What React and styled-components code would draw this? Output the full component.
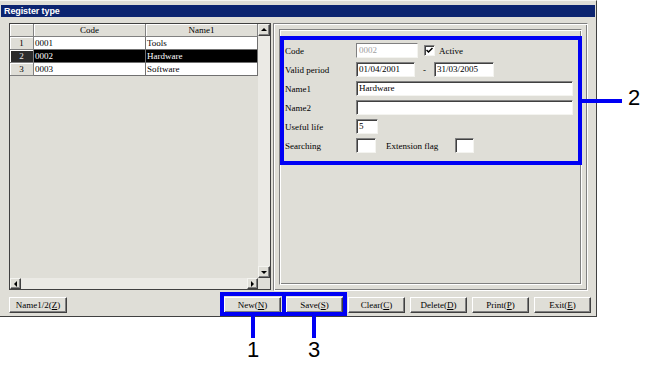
import React from 'react';
import styled, { createGlobalStyle } from 'styled-components';

const GRAY = '#dfded7';
const BLUE = '#0000f4';

const Global = createGlobalStyle`
  html, body { margin: 0; padding: 0; background: #fff; }
  body { font-family: "Liberation Serif", serif; }
  * { box-sizing: border-box; }
`;

const Page = styled.div`
  position: relative;
  width: 651px;
  height: 368px;
  background: #fff;
  overflow: hidden;
`;

const Window = styled.div`
  width: 597px;
  height: 317px;
  background: ${GRAY};
  border-top: 1px solid #f6f6f2;
  border-right: 1px solid #404040;
  border-bottom: 1px solid #404040;
  display: flex;
  flex-direction: column;
`;

const TitleBar = styled.div`
  height: 12px;
  margin: 4px 1px 0 1px;
  background: #0c2470;
  color: #fff;
  font: bold 9px "Liberation Sans", Arial, sans-serif;
  letter-spacing: -0.1px;
  line-height: 12px;
  padding-left: 3px;
`;

const Body = styled.div`
  display: flex;
  gap: 2px;
  margin-top: 6px;
  padding-left: 9px;
  height: 268px;
`;

const GridPanel = styled.div`
  width: 262px;
  height: 267px;
  border: 1px solid #404040;
  display: grid;
  grid-template-columns: 1fr 12px;
  grid-template-rows: 1fr 11px;
  background: ${GRAY};
`;

const Table = styled.div`
  display: grid;
  grid-template-columns: 24px 112px 112px;
  grid-auto-rows: 13px;
  align-content: start;
  font-size: 9px;
  line-height: 12px;
`;

const HeadCell = styled.div`
  background: ${GRAY};
  border-right: 1px solid #808080;
  border-bottom: 1px solid #808080;
  box-shadow: inset 1px 1px #fff;
  text-align: center;
  color: #000;
`;

const RowHead = styled(HeadCell)`
  background: ${(p) => (p.$sel ? '#2c2c2c' : GRAY)};
  color: ${(p) => (p.$sel ? '#e8e8e8' : '#000')};
`;

const DataCell = styled.div`
  background: ${(p) => (p.$sel ? '#000' : '#fff')};
  color: ${(p) => (p.$sel ? '#fff' : '#000')};
  border-right: 1px solid #707070;
  border-bottom: 1px solid #707070;
  padding-left: 1px;
  white-space: nowrap;
`;

const VScroll = styled.div`
  display: flex;
  flex-direction: column;
  background: #ebeae5;
`;

const HScroll = styled.div`
  display: flex;
  background: #ebeae5;
`;

const Track = styled.div`
  flex: 1;
`;

const Corner = styled.div`
  background: ${GRAY};
`;

const ScrollBtn = styled.div`
  width: ${(p) => p.$w}px;
  height: ${(p) => p.$h}px;
  flex: none;
  background: ${GRAY};
  border: 1px solid;
  border-color: #f4f4f0 #404040 #404040 #f4f4f0;
  box-shadow: inset -1px -1px #808080;
  display: flex;
  align-items: center;
  justify-content: center;
`;

const Arrow = styled.span`
  width: 0;
  height: 0;
  border: 3px solid transparent;
  ${(p) => p.$dir === 'up' && 'border-bottom-color:#000; border-top-width:0; margin-top:-1px;'}
  ${(p) => p.$dir === 'down' && 'border-top-color:#000; border-bottom-width:0;'}
  ${(p) => p.$dir === 'left' && 'border-right-color:#000; border-left-width:0;'}
  ${(p) => p.$dir === 'right' && 'border-left-color:#000; border-right-width:0;'}
`;

const RightPanel = styled.div`
  width: 315px;
  height: 268px;
  border: 1px solid;
  border-color: #808080 #fff #fff #808080;
  box-shadow: inset 1px 1px #fff, inset -1px -1px #808080;
  padding: 5px;
`;

const GroupBox = styled.div`
  height: 100%;
  border: 1px solid;
  border-color: #808080 #fff #fff #808080;
  box-shadow: inset 1px 1px #fff, inset -1px -1px #808080;
  padding: 13px 0 0 5px;
  display: flex;
  flex-direction: column;
  gap: 4px;
  font-size: 9px;
`;

const FormRow = styled.div`
  display: flex;
  align-items: center;
  height: 15px;
`;

const Label = styled.span`
  width: ${(p) => p.$w || 71}px;
  flex: none;
  margin-left: ${(p) => p.$ml || 0}px;
  color: #000;
`;

const Field = styled.div`
  width: ${(p) => p.$w}px;
  height: 15px;
  flex: none;
  background: #fff;
  border: 1px solid;
  border-color: #808080 #f4f4f0 #f4f4f0 #808080;
  box-shadow: ${(p) => (p.$dis ? 'none' : 'inset 1px 1px #404040')};
  color: ${(p) => (p.$dis ? '#a0a0a0' : '#000')};
  padding-left: 2px;
  line-height: 13px;
  white-space: nowrap;
  overflow: hidden;
`;

const Dash = styled.span`
  width: 19px;
  text-align: center;
  flex: none;
`;

const CheckBox = styled.span`
  width: 11px;
  height: 11px;
  margin-left: 6px;
  flex: none;
  background: #fff;
  border: 1px solid;
  border-color: #808080 #f4f4f0 #f4f4f0 #808080;
  box-shadow: inset 1px 1px #404040;
  display: flex;
  align-items: center;
  justify-content: center;
`;

const CheckText = styled.span`
  margin-left: 4px;
`;

const ButtonBar = styled.div`
  display: flex;
  justify-content: space-between;
  margin-top: 6px;
  padding: 0 5px 0 9px;
`;

const BtnGroup = styled.div`
  display: flex;
  gap: 5px;
`;

const Btn = styled.div`
  width: ${(p) => p.$w || 57}px;
  height: 16px;
  background: ${GRAY};
  border: 1px solid;
  border-color: #fff #404040 #404040 #fff;
  box-shadow: inset -1px -1px #808080;
  font-size: 9px;
  line-height: 14px;
  text-align: center;
  color: #000;
  white-space: nowrap;
`;

const Key = styled.u`
  text-decoration: underline;
`;

const Callout = styled.div`
  position: absolute;
  left: ${(p) => p.$x}px;
  top: ${(p) => p.$y}px;
  width: ${(p) => p.$w}px;
  height: ${(p) => p.$h}px;
  border: 4px solid ${BLUE};
`;

const Leader = styled.div`
  position: absolute;
  left: ${(p) => p.$x}px;
  top: ${(p) => p.$y}px;
  width: ${(p) => p.$w}px;
  height: ${(p) => p.$h}px;
  background: ${BLUE};
`;

const Num = styled.div`
  position: absolute;
  left: ${(p) => p.$x}px;
  top: ${(p) => p.$y}px;
  width: 20px;
  text-align: center;
  font: 22px/22px "Liberation Sans", Arial, sans-serif;
  color: #000;
`;

const rows = [
  ['1', '0001', 'Tools'],
  ['2', '0002', 'Hardware', true],
  ['3', '0003', 'Software'],
];

const buttons = [
  ['New', 'N'],
  ['Save', 'S'],
  ['Clear', 'C'],
  ['Delete', 'D'],
  ['Print', 'P'],
  ['Exit', 'E'],
];

export default function App() {
  return (
    <Page>
      <Global />
      <Window>
        <TitleBar>Register type</TitleBar>
        <Body>
          <GridPanel>
            <Table>
              <HeadCell />
              <HeadCell>Code</HeadCell>
              <HeadCell>Name1</HeadCell>
              {rows.map(([n, code, name, sel]) => (
                <React.Fragment key={n}>
                  <RowHead $sel={sel}>{n}</RowHead>
                  <DataCell $sel={sel}>{code}</DataCell>
                  <DataCell $sel={sel}>{name}</DataCell>
                </React.Fragment>
              ))}
            </Table>
            <VScroll>
              <ScrollBtn $w={12} $h={12}><Arrow $dir="up" /></ScrollBtn>
              <Track />
              <ScrollBtn $w={12} $h={12}><Arrow $dir="down" /></ScrollBtn>
            </VScroll>
            <HScroll>
              <ScrollBtn $w={11} $h={11}><Arrow $dir="left" /></ScrollBtn>
              <Track />
              <ScrollBtn $w={11} $h={11}><Arrow $dir="right" /></ScrollBtn>
            </HScroll>
            <Corner />
          </GridPanel>
          <RightPanel>
            <GroupBox>
              <FormRow>
                <Label>Code</Label>
                <Field $w={62} $dis>0002</Field>
                <CheckBox>
                  <svg width="7" height="7" viewBox="0 0 7 7">
                    <path d="M0.5 3 L2.5 5 L6.5 1" stroke="#000" strokeWidth="1.5" fill="none" />
                  </svg>
                </CheckBox>
                <CheckText>Active</CheckText>
              </FormRow>
              <FormRow>
                <Label>Valid period</Label>
                <Field $w={59}>01/04/2001</Field>
                <Dash>-</Dash>
                <Field $w={60}>31/03/2005</Field>
              </FormRow>
              <FormRow>
                <Label>Name1</Label>
                <Field $w={217}>Hardware</Field>
              </FormRow>
              <FormRow>
                <Label>Name2</Label>
                <Field $w={217} />
              </FormRow>
              <FormRow>
                <Label>Useful life</Label>
                <Field $w={22}>5</Field>
              </FormRow>
              <FormRow>
                <Label>Searching</Label>
                <Field $w={20} />
                <Label $w={69} $ml={10}>Extension flag</Label>
                <Field $w={19} />
              </FormRow>
            </GroupBox>
          </RightPanel>
        </Body>
        <ButtonBar>
          <Btn $w={58}>Name1/2(<Key>Z</Key>)</Btn>
          <BtnGroup>
            {buttons.map(([t, k]) => (
              <Btn key={t}>
                {t}(<Key>{k}</Key>)
              </Btn>
            ))}
          </BtnGroup>
        </ButtonBar>
      </Window>

      <Callout $x={280} $y={36} $w={302} $h={129} />
      <Leader $x={582} $y={99} $w={40} $h={4} />
      <Num $x={624} $y={87}>2</Num>

      <Callout $x={220} $y={292} $w={66} $h={24} />
      <Callout $x={282} $y={292} $w={65} $h={24} />
      <Leader $x={251} $y={316} $w={4} $h={22} />
      <Leader $x={312} $y={316} $w={4} $h={22} />
      <Num $x={243} $y={339}>1</Num>
      <Num $x={304} $y={339}>3</Num>
    </Page>
  );
}
